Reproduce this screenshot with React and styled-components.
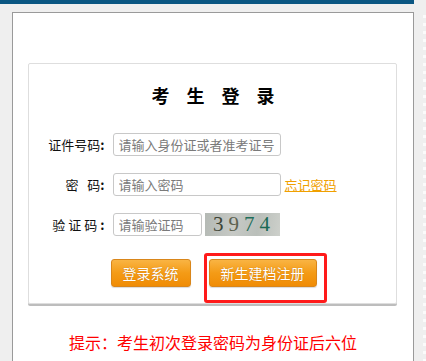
import React from 'react'
import styled, { createGlobalStyle } from 'styled-components'

const Colors = {
  page: '#efefef',
  blue: '#0b5783',
  frame: '#9a9a9a',
  orange: '#f29a12',
  link: '#f0a000',
  red: '#ff1a1a'
}

const GlobalStyle = createGlobalStyle`
  html, body {
    margin: 0;
    padding: 0;
    background: ${Colors.page};
    font-family: "Noto Sans CJK SC", "Noto Sans", sans-serif;
    overflow: hidden;
  }
`

const Page = styled.div`
  width: 426px;
  height: 361px;
  overflow: hidden;
`

const TopBar = styled.div`
  width: 414px;
  height: 4px;
  background: ${Colors.blue};
`

const Body = styled.div`
  display: flex;
  height: 349px;
  padding-top: 8px;
`

const Panel = styled.div`
  margin-left: 12px;
  width: 400px;
  flex: none;
  background: #fff;
  border: 1px solid ${Colors.frame};
  border-bottom: none;
  display: flex;
  flex-direction: column;
  align-items: center;
`

const Scroller = styled.div`
  flex: 1;
  background: repeating-linear-gradient(
    to bottom,
    transparent 0,
    transparent 3px,
    #fbfbfb 3px,
    #fbfbfb 6px,
    transparent 6px,
    transparent 8px
  ) right top / 3px 100% no-repeat;
`

const Card = styled.div`
  position: relative;
  margin: 50px 0 0 -2px;
  width: 369px;
  box-sizing: border-box;
  border: 1px solid #dedede;
  border-radius: 2px;
  box-shadow: 0 2px 0 #bdbdbd;
  padding: 19px 0 16px;
`

const Title = styled.h2`
  margin: 0 0 26px;
  text-align: center;
  font-size: 18px;
  line-height: 24px;
  font-weight: 700;
  letter-spacing: 17px;
  padding-left: 19px;
  color: #000;
`

const Row = styled.div`
  display: flex;
  align-items: center;
  height: 23px;
  margin-bottom: 17px;
`

const Label = styled.label`
  width: 76px;
  flex: none;
  text-align: right;
  font-size: 13px;
  color: #111;
  letter-spacing: ${p => p.$spread || 0}px;
  margin-right: 8px;
  white-space: pre;
  b {
    letter-spacing: 0;
    font-weight: 700;
  }
`

const Input = styled.input`
  box-sizing: border-box;
  width: ${p => p.$w}px;
  height: 23px;
  border: 1px solid #c8c8c8;
  border-radius: 3px;
  padding: 0 0 0 5px;
  font-family: "Noto Sans CJK SC", sans-serif;
  font-size: 13px;
  outline: none;
  &::placeholder {
    color: #7a7a7a;
  }
`

const ForgotLink = styled.a`
  margin-left: 4px;
  font-size: 13px;
  color: ${Colors.link};
  text-decoration: underline;
`

const Captcha = styled.div`
  margin-left: 3px;
  width: 75px;
  height: 23px;
  background: linear-gradient(100deg, #b4b9b4 0%, #c6c9c5 40%, #babfba 70%, #cdd0cb 100%);
  display: flex;
  align-items: center;
  justify-content: center;
  gap: 4px;
  font-family: "Liberation Serif", serif;
  font-size: 21px;
  letter-spacing: 1px;
`

const Digit = styled.span`
  color: ${p => p.$c};
`

const Buttons = styled.div`
  display: flex;
  gap: 18px;
  padding: 6px 0 0 82px;
`

const Button = styled.button`
  width: ${p => p.$w}px;
  height: 28px;
  border: 1px solid #d9861a;
  border-radius: 3px;
  background: linear-gradient(to bottom, #f9b443 0%, #f49b16 50%, #f08c05 100%);
  color: #fff;
  font-family: "Noto Sans CJK SC", sans-serif;
  font-size: 14px;
  text-shadow: 0 0 1px #b86a00;
  box-shadow: 0 1px 1px rgba(0, 0, 0, 0.15);
  padding: 0;
`

const Marker = styled.div`
  position: absolute;
  left: 175px;
  top: 189px;
  width: 123px;
  height: 50px;
  box-sizing: border-box;
  border: 3px solid ${Colors.red};
  border-radius: 3px;
`

const Hint = styled.p`
  margin: 28px 0 0;
  font-size: 16px;
  line-height: 20px;
  color: #ff0000;
`

export default function App() {
  return (
    <Page>
      <GlobalStyle />
      <TopBar />
      <Body>
        <Panel>
          <Card>
            <Title>考生登录</Title>
            <Row>
              <Label>证件号码<b>:</b></Label>
              <Input $w={168} placeholder="请输入身份证或者准考证号" />
            </Row>
            <Row>
              <Label>密   码<b>:</b></Label>
              <Input $w={168} type="password" placeholder="请输入密码" />
              <ForgotLink href="#">忘记密码</ForgotLink>
            </Row>
            <Row>
              <Label $spread={3}>验证码<b>:</b></Label>
              <Input $w={89} placeholder="请输验证码" />
              <Captcha>
                <Digit $c="#3d4436">3</Digit>
                <Digit $c="#5d6250">9</Digit>
                <Digit $c="#1f6e5a">7</Digit>
                <Digit $c="#1b6a55">4</Digit>
              </Captcha>
            </Row>
            <Buttons>
              <Button $w={80}>登录系统</Button>
              <Button $w={108}>新生建档注册</Button>
            </Buttons>
            <Marker />
          </Card>
          <Hint>提示：考生初次登录密码为身份证后六位</Hint>
        </Panel>
        <Scroller />
      </Body>
    </Page>
  )
}
